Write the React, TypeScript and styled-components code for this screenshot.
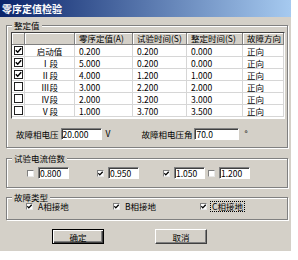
import { Fragment } from "react";
import styled, { createGlobalStyle } from "styled-components";

const FONT = `"Noto Sans CJK SC", "Noto Sans", sans-serif`;
const FACE = "#d4d0c8";

const GlobalStyle = createGlobalStyle`
  * { box-sizing: border-box; }
  body { margin: 0; background: #ffffff; }
`;

const Window = styled.div`
  width: 291px;
  height: 251px;
  display: flex;
  flex-direction: column;
  background: ${FACE};
  font-family: ${FONT};
  font-size: 8.5px;
  color: #000;
`;

const TitleBar = styled.div`
  height: 17px;
  flex: none;
  display: flex;
  align-items: center;
  padding-left: 2px;
  background: linear-gradient(to right, #0a246a, #a6caf0);
  color: #fff;
  font-size: 10px;
  font-weight: bold;
`;

const Body = styled.div`
  display: flex;
  flex-direction: column;
  padding: 8px 3px 0 6px;
`;

const Group = styled.section<{ $gap: number; $pad: string }>`
  position: relative;
  margin-top: ${(p) => p.$gap}px;
  padding: ${(p) => p.$pad};
  border: 1px solid #808080;
  box-shadow: 1px 1px 0 #fff, inset 1px 1px 0 #fff;
`;

const Legend = styled.span`
  position: absolute;
  top: -7px;
  left: 5px;
  padding: 0 2px;
  line-height: 12px;
  background: ${FACE};
`;

const TableBox = styled.div`
  height: 87px;
  background: #fff;
  border: 1px solid;
  border-color: #404040 #fff #fff #404040;
  overflow: hidden;
`;

const Grid = styled.div`
  display: grid;
  grid-template-columns: 13px 50px 58px 54px 56px 41px;
  grid-auto-rows: 12px;
`;

const HeadCell = styled.div`
  padding-left: 4px;
  line-height: 11px;
  white-space: nowrap;
  overflow: hidden;
  background: ${FACE};
  border-right: 1px solid #808080;
  border-bottom: 1px solid #808080;
  box-shadow: inset 1px 1px 0 #fff;
`;

const Cell = styled.div<{ $center?: boolean }>`
  display: flex;
  align-items: center;
  justify-content: ${(p) => (p.$center ? "center" : "flex-start")};
  padding-left: ${(p) => (p.$center ? 0 : 4)}px;
  white-space: nowrap;
  overflow: hidden;
  border-right: 1px solid #d6d6d6;
  border-bottom: 1px solid #d6d6d6;
`;

const TableCheck = styled.span`
  width: 9px;
  height: 9px;
  display: flex;
  align-items: center;
  justify-content: center;
  border: 1px solid #202020;
  background: #fff;
`;

const SmallCheck = styled.span`
  width: 7px;
  height: 7px;
  flex: none;
  display: flex;
  align-items: center;
  justify-content: center;
  border: 1px solid;
  border-color: #808080 #e8e8e8 #e8e8e8 #808080;
  background: #fff;
`;

const ParamRow = styled.div`
  display: flex;
  align-items: center;
  height: 12px;
  margin-top: 9px;
`;

const Label = styled.span<{ $ml: number }>`
  margin-left: ${(p) => p.$ml}px;
  margin-right: 2px;
  white-space: nowrap;
`;

const Unit = styled.span<{ $ml: number }>`
  margin-left: ${(p) => p.$ml}px;
  align-self: flex-start;
  line-height: 10px;
`;

const Field = styled.input<{ $w: number }>`
  width: ${(p) => p.$w}px;
  height: 12px;
  flex: none;
  padding: 0 0 0 1px;
  border: 1px solid;
  border-color: #808080 #fff #fff #808080;
  box-shadow: inset 1px 1px 0 #404040;
  background: #fff;
  font-family: ${FONT};
  font-size: 8.5px;
  color: #000;
  outline: none;
`;

const OptionRow = styled.div<{ $h: number }>`
  display: flex;
  align-items: center;
  height: ${(p) => p.$h}px;
`;

const Option = styled.label<{ $ml: number; $w?: number }>`
  display: flex;
  align-items: center;
  gap: 4px;
  margin-left: ${(p) => p.$ml}px;
  width: ${(p) => (p.$w ? `${p.$w}px` : "auto")};
  white-space: nowrap;
`;

const OptionText = styled.span<{ $focus?: boolean }>`
  line-height: 9px;
  padding: 0 1px;
  outline: ${(p) => (p.$focus ? "1px dotted #000" : "none")};
`;

const ButtonRow = styled.div`
  display: flex;
  gap: 51px;
  margin-top: 9px;
  padding-left: 46px;
`;

const Button = styled.button<{ $default?: boolean }>`
  width: 52px;
  height: 15px;
  padding: 0;
  background: ${FACE};
  font-family: ${FONT};
  font-size: 8.5px;
  color: #000;
  border: 1px solid;
  border-color: ${(p) =>
    p.$default ? "#000" : "#fff #404040 #404040 #fff"};
  box-shadow: ${(p) =>
    p.$default
      ? "inset 1px 1px 0 #fff, inset -1px -1px 0 #404040, inset -2px -2px 0 #808080"
      : "inset -1px -1px 0 #808080"};
`;

const Tick = () => (
  <svg width="7" height="7" viewBox="0 0 7 7">
    <polyline
      points="0.8,3.2 2.7,5.2 6.2,1.2"
      fill="none"
      stroke="#000"
      strokeWidth="1.5"
    />
  </svg>
);

const SmallTick = () => (
  <svg width="5" height="5" viewBox="0 0 5 5">
    <polyline
      points="0.3,2.2 1.8,3.9 4.7,0.8"
      fill="none"
      stroke="#000"
      strokeWidth="1.3"
    />
  </svg>
);

const heads = ["", "", "零序定值(A)", "试验时间(S)", "整定时间(S)", "故障方向"];

const rows = [
  { name: "启动值", zero: "0.200", test: "0.200", set: "0.000", on: true },
  { name: "Ⅰ段", zero: "5.000", test: "0.200", set: "0.000", on: true },
  { name: "Ⅱ段", zero: "4.000", test: "1.200", set: "1.000", on: true },
  { name: "Ⅲ段", zero: "3.000", test: "2.200", set: "2.000", on: false },
  { name: "Ⅳ段", zero: "2.000", test: "3.200", set: "3.000", on: false },
  { name: "Ⅴ段", zero: "1.000", test: "3.700", set: "3.500", on: false },
];

const multiples = [
  { value: "0.800", on: false, ml: 20 },
  { value: "0.950", on: true, ml: 28 },
  { value: "1.050", on: true, ml: 24 },
  { value: "1.200", on: false, ml: 3 },
];

const faults = [
  { label: "A相接地", ml: 19 },
  { label: "B相接地", ml: 0 },
  { label: "C相接地", ml: 0, focus: true },
];

const App = () => {
  return (
    <>
      <GlobalStyle />
      <Window>
        <TitleBar>零序定值检验</TitleBar>
        <Body>
          <Group $gap={0} $pad="6px 2px 7px 4px">
            <Legend>整定值</Legend>
            <TableBox>
              <Grid>
                {heads.map((h, i) => (
                  <HeadCell key={i}>{h}</HeadCell>
                ))}
                {rows.map((r) => (
                  <Fragment key={r.name}>
                    <Cell $center>
                      <TableCheck>{r.on && <Tick />}</TableCheck>
                    </Cell>
                    <Cell $center>{r.name}</Cell>
                    <Cell>{r.zero}</Cell>
                    <Cell>{r.test}</Cell>
                    <Cell>{r.set}</Cell>
                    <Cell>正向</Cell>
                  </Fragment>
                ))}
              </Grid>
            </TableBox>
            <ParamRow>
              <Label $ml={5}>故障相电压</Label>
              <Field $w={41} defaultValue="20.000" />
              <Unit $ml={4}>V</Unit>
              <Label $ml={31}>故障相电压角</Label>
              <Field $w={45} defaultValue="70.0" />
              <Unit $ml={5}>°</Unit>
            </ParamRow>
          </Group>

          <Group $gap={10} $pad="8px 0 8px 0">
            <Legend>试验电流倍数</Legend>
            <OptionRow $h={12}>
              {multiples.map((m) => (
                <Option key={m.value} $ml={m.ml}>
                  <SmallCheck>{m.on && <SmallTick />}</SmallCheck>
                  <Field $w={31} defaultValue={m.value} />
                </Option>
              ))}
            </OptionRow>
          </Group>

          <Group $gap={9} $pad="3px 0 8px 0">
            <Legend>故障类型</Legend>
            <OptionRow $h={10}>
              {faults.map((f) => (
                <Option key={f.label} $ml={f.ml} $w={91}>
                  <SmallCheck>
                    <SmallTick />
                  </SmallCheck>
                  <OptionText $focus={f.focus}>{f.label}</OptionText>
                </Option>
              ))}
            </OptionRow>
          </Group>

          <ButtonRow>
            <Button $default>确定</Button>
            <Button>取消</Button>
          </ButtonRow>
        </Body>
      </Window>
    </>
  );
};

export default App;
